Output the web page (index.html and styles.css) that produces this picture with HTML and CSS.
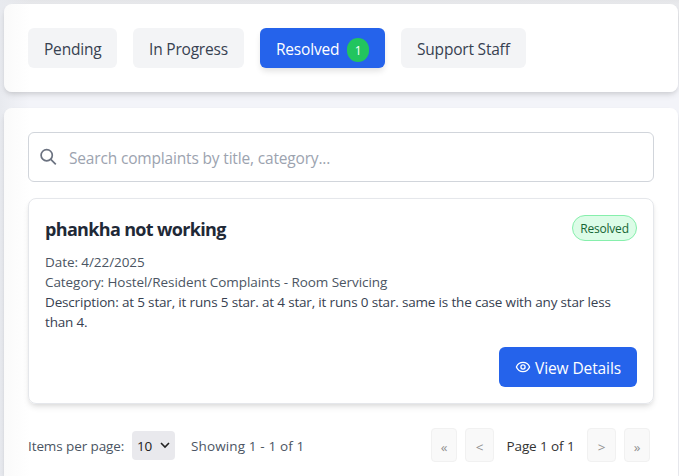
FILE: index.html
```
<!DOCTYPE html>
<html lang="en">
<head>
<meta charset="utf-8">
<title>Complaints</title>
<link rel="stylesheet" href="styles.css">
</head>
<body>
<main class="page">
  <nav class="panel tabs">
    <button class="tab pending"><span>Pending</span></button>
    <button class="tab progress"><span>In Progress</span></button>
    <button class="tab active"><span>Resolved</span><span class="count">1</span></button>
    <button class="tab staff"><span>Support Staff</span></button>
  </nav>
  <section class="panel list">
    <div class="search">
      <svg width="18" height="18" viewBox="0 0 18 18" fill="none" stroke="#6b7280" stroke-width="1.7"><circle cx="6.7" cy="7.2" r="5.6"/><path d="M10.8 11.3l5 5"/></svg>
      <span class="placeholder">Search complaints by title, category...</span>
    </div>
    <article class="card">
      <header class="card-head">
        <h3>phankha not working</h3>
        <span class="status">Resolved</span>
      </header>
      <p class="date">Date: 4/22/2025</p>
      <p class="category">Category: Hostel/Resident Complaints - Room Servicing</p>
      <p class="description">Description: at 5 star, it runs 5 star. at 4 star, it runs 0 star. same is the case with any star less<br>than 4.</p>
      <div class="actions">
        <button class="view"><svg width="16" height="16" viewBox="0 0 16 16" fill="none" stroke="#fff" stroke-width="1.3"><path d="M1.4 8C2.6 5.1 5 3.4 8 3.4S13.4 5.1 14.6 8C13.4 10.9 11 12.6 8 12.6S2.6 10.9 1.4 8Z"/><circle cx="8" cy="8" r="2.1"/></svg><span>View Details</span></button>
      </div>
    </article>
    <footer class="pager">
      <span class="items">Items per page:</span>
      <span class="select"><span>10</span><svg width="10" height="7" viewBox="0 0 10 7" fill="none" stroke="#222" stroke-width="1.6"><path d="M1 1l4 4 4-4"/></svg></span>
      <span class="showing">Showing 1 - 1 of 1</span>
      <div class="pages">
        <button class="outer">«</button>
        <button class="inner">&lt;</button>
        <span class="current">Page 1 of 1</span>
        <button class="inner">&gt;</button>
        <button class="outer">»</button>
      </div>
    </footer>
  </section>
</main>
</body>
</html>
```
FILE: styles.css
```
* { box-sizing: border-box; }
body {
  margin: 0;
  height: 476px;
  overflow: hidden;
  background: linear-gradient(#e4e5e8, #e8e9ec 4px, #f3f4f9 92px, #f3f4f9);
  font-family: "Segoe UI", "Open Sans", "Noto Sans", sans-serif;
  font-size: 16px;
  color: #374151;
  white-space: nowrap;
}
button { font: inherit; color: inherit; border: 0; padding: 0; margin: 0; letter-spacing: inherit; }
h3, p { margin: 0; }
.page { display: flex; flex-direction: column; gap: 16px; padding: 4px 1px 0 4px; background: linear-gradient(90deg, #e8eaef, transparent 30px); }
.panel {
  background: linear-gradient(90deg, #fafafa, #fff 26px);
  border-radius: 8px;
  padding: 24px;
  box-shadow: 0 4px 6px -1px rgba(0,0,0,.1), 0 2px 4px -1px rgba(0,0,0,.08);
}
.tabs { display: flex; gap: 16px; height: 88px; }
.tab {
  height: 40px;
  border-radius: 6px;
  background: #f3f4f6;
  padding: 2px 0 0 16px;
  display: flex;
  align-items: center;
  font-size: 15.5px;
  letter-spacing: -.2px;
}
.pending { width: 89px; }
.progress { width: 111px; }
.active { width: 125px; background: #2563eb; color: #fff; box-shadow: 0 4px 6px -1px rgba(0,0,0,.12); }
.staff { width: 125px; }
.count {
  width: 22px;
  height: 24px;
  margin: 1px 16px 0 auto;
  border-radius: 12px;
  background: #22c55e;
  font-size: 12px;
  line-height: 25px;
  text-align: center;
}
.list { height: 368px; padding-bottom: 0; border-radius: 8px 8px 0 0; }
.search {
  width: 626px;
  height: 50px;
  border: 1px solid #d1d5db;
  border-radius: 6px;
  display: flex;
  align-items: center;
  padding-left: 11px;
}
.placeholder { margin: 2px 0 0 11px; color: #9ca3af; font-size: 15.5px; letter-spacing: -.17px; }
.card {
  width: 626px;
  height: 206px;
  margin-top: 16px;
  border: 1px solid #e5e7eb;
  border-radius: 8px;
  padding: 16px;
  box-shadow: 0 4px 6px -1px rgba(0,0,0,.1), 0 2px 4px -1px rgba(0,0,0,.06);
  font-size: 13.5px;
  line-height: 20px;
}
.card-head { display: flex; justify-content: space-between; height: 37px; }
h3 { font-size: 18px; line-height: 28px; font-weight: 700; color: #1f2937; letter-spacing: -.66px; }
.status {
  width: 65px;
  height: 26px;
  border: 1px solid #86efac;
  border-radius: 13px;
  background: #dcfce7;
  color: #166534;
  font-size: 12px;
  line-height: 25px;
  text-align: center;
  letter-spacing: -.2px;
}
.date, .category { color: #4b5563; letter-spacing: -.07px; }
.description { letter-spacing: -.17px; }
.actions { display: flex; justify-content: flex-end; margin-top: 15px; }
.view {
  display: flex;
  align-items: center;
  width: 138px;
  height: 40px;
  border-radius: 6px;
  background: #2563eb;
  color: #fff;
  padding-left: 16px;
  font-size: 15.5px;
  letter-spacing: -.1px;
}
.view span { margin: 2px 0 0 4px; }
.pager { display: flex; align-items: center; height: 34px; margin-top: 24px; width: 622px; font-size: 13.5px; color: #4b5563; letter-spacing: -.1px; }
.items { width: 104px; padding-top: 2px; }
.select {
  width: 43px;
  height: 29px;
  border-radius: 4px;
  background: #e9e9ed;
  color: #222;
  display: flex;
  align-items: center;
  justify-content: space-between;
  padding: 1px 5px 0;
  font-size: 13.5px;
}
.showing { margin-left: 16px; padding-top: 2px; letter-spacing: .13px; }
.pages { display: flex; margin-left: auto; align-items: center; gap: 8px; }
.pages button { height: 34px; border: 1px solid #f1f1f1; border-radius: 4px; background: #f9f9f9; color: #929292; font-size: 13.5px; padding-top: 3px; }
.pages .outer { width: 26px; }
.pages .inner { width: 29px; }
.current { width: 69px; margin: 0 4px; padding-top: 2px; text-align: center; color: #333; }
```
